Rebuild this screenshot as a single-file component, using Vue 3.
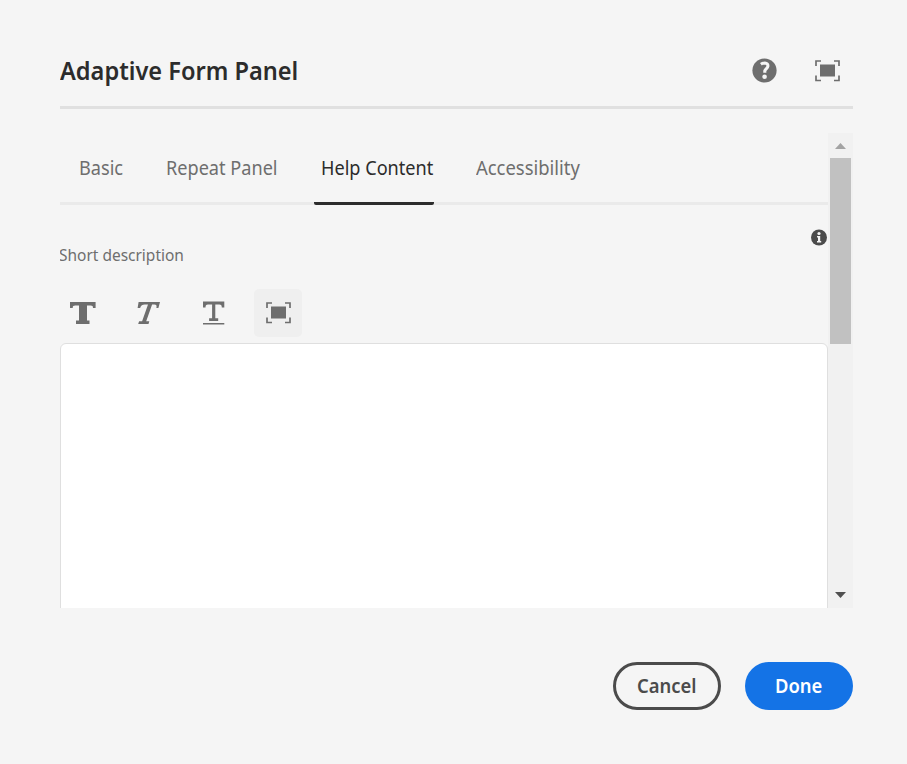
<script setup>
import { ref } from 'vue'

const tabs = [
  { id: 'basic', label: 'Basic' },
  { id: 'repeat', label: 'Repeat Panel' },
  { id: 'help', label: 'Help Content' },
  { id: 'access', label: 'Accessibility' }
]
const active = ref('help')
</script>

<template>
  <main class="dialog">
    <header class="head">
      <h1><span class="fit">Adaptive Form Panel</span></h1>
      <div class="head-actions">
        <button class="plain" aria-label="Help">
          <svg width="25" height="25" viewBox="0 0 25 25">
            <circle cx="12.5" cy="12.5" r="12.1" fill="#6e6e6e" />
            <path d="M8.9 6.2C10.3 5.2 11.7 5 12.9 5C15.2 5.1 16 6.6 15.9 8.1C15.8 10.3 13.2 11.1 12.8 12.8V14.8" fill="none" stroke="#f5f5f5" stroke-width="3.1" />
            <circle cx="12.6" cy="18.7" r="2.3" fill="#f5f5f5" />
          </svg>
        </button>
        <button class="plain" aria-label="Toggle fullscreen">
          <svg width="25" height="22" viewBox="0 0 25 22">
            <path d="M1 6V1H6M19 1H24V6M24 15.5V20.5H19M6 20.5H1V15.5" fill="none" stroke="#6e6e6e" stroke-width="1.7" />
            <rect x="5" y="4.5" width="15" height="12" fill="#6e6e6e" />
          </svg>
        </button>
      </div>
    </header>

    <section class="viewport">
      <div class="content">
        <nav class="tabs">
          <button
            v-for="tab in tabs"
            :key="tab.id"
            :class="['tab', tab.id, { active: active === tab.id }]"
            @click="active = tab.id"
          ><span class="fit">{{ tab.label }}</span></button>
        </nav>
        <div class="info-row">
          <svg width="16" height="17" viewBox="0 0 16 17">
            <circle cx="8" cy="8.5" r="8" fill="#4b4b4b" />
            <circle cx="8" cy="4.5" r="1.6" fill="#f5f5f5" />
            <path d="M6 7.1H9.2V12H10.2V13.5H6V12H7V8.5H6Z" fill="#f5f5f5" />
          </svg>
        </div>
        <div class="label"><span class="fit">Short description</span></div>
        <div class="toolbar">
          <button class="tool" aria-label="Bold">
            <svg width="26" height="22" viewBox="0 0 26 22">
              <path d="M0 0H25.6V6H23C23 4 22.4 3.4 20.6 3.4H17V18.6H19.5V22H6V18.6H9V3.4H5.2C3.4 3.4 2.7 4 2.7 6H0Z" />
            </svg>
          </button>
          <button class="tool" aria-label="Italic">
            <svg width="24" height="22" viewBox="0 0 24 22">
              <path transform="translate(.8 0)" d="M1.8 0H23.2L21.6 6H19.6C20.1 3.6 19.6 2.6 17.5 2.6H15.3L9.4 19.2H12.5L11.7 22H1.4L2.3 19.2H5.3L11.2 2.6H8C5.4 2.6 4.4 3.6 3.3 6H.8Z" />
            </svg>
          </button>
          <button class="tool" aria-label="Underline">
            <svg width="24" height="24" viewBox="0 0 24 24">
              <path transform="translate(2 0)" d="M0 .6H21.3V6.6H18.8C18.7 4 18.3 3.4 16.3 3.4H12.3V17.3H15.2V20H6.1V17.3H9.1V3.4H5C3 3.4 2.6 4 2.5 6.6H0ZM0 22H21.3V23.5H0Z" />
            </svg>
          </button>
          <button class="tool shaded" aria-label="Fullscreen editor">
            <svg width="25" height="22" viewBox="0 0 25 22">
              <path d="M1 6V1H6M19 1H24V6M24 15.5V20.5H19M6 20.5H1V15.5" fill="none" stroke="#6e6e6e" stroke-width="1.7" />
              <rect x="5" y="4.5" width="15" height="12" />
            </svg>
          </button>
        </div>
        <div class="editor" contenteditable="true"></div>
      </div>
      <div class="scrollbar">
        <svg class="arrow" width="11" height="6" viewBox="0 0 11 6"><path d="M0 6L5.5 0L11 6Z" fill="#a3a3a3" /></svg>
        <div class="thumb"></div>
        <svg class="arrow down" width="11" height="6" viewBox="0 0 11 6"><path d="M0 0H11L5.5 6Z" fill="#505050" /></svg>
      </div>
    </section>

    <footer class="foot">
      <button class="btn cancel"><span class="fit">Cancel</span></button>
      <button class="btn done"><span class="fit">Done</span></button>
    </footer>
  </main>
</template>

<style>
body { background: #f5f5f5; }
</style>

<style scoped>
* { box-sizing: border-box; }
button {
  font: inherit;
  border: 0;
  padding: 0;
  background: none;
  flex: none;
}
svg { display: block; flex: none; }
.fit {
  display: inline-block;
  transform-origin: left center;
  white-space: nowrap;
}
.dialog {
  width: 907px;
  height: 764px;
  padding: 36px 54px 54px 60px;
  display: flex;
  flex-direction: column;
  background: #f5f5f5;
  font-family: "Noto Sans", "Open Sans", sans-serif;
  color: #6e6e6e;
}
.head {
  height: 73px;
  flex: none;
  display: flex;
  justify-content: space-between;
  border-bottom: 3px solid #e0e0e0;
}
h1 {
  margin: 0;
  font-size: 25px;
  font-weight: 600;
  line-height: 69px;
  color: #2c2c2c;
}
h1 .fit { transform: scaleX(0.943); }
.head-actions {
  display: flex;
  align-items: center;
  gap: 38px;
  padding-right: 13px;
  height: 69px;
}
.viewport {
  margin-top: 24px;
  height: 475px;
  flex: none;
  display: flex;
  overflow: hidden;
}
.content {
  width: 768px;
  display: flex;
  flex-direction: column;
}
.tabs {
  display: flex;
  height: 72px;
  flex: none;
  border-bottom: 3px solid #eaeaea;
}
.tab {
  height: 72px;
  font-size: 19px;
  line-height: 70px;
  text-align: left;
  color: #6e6e6e;
  display: flex;
}
.tab .fit { transform: scaleX(0.954); }
.tab.access .fit { transform: scaleX(0.97); }
.basic { width: 87px; padding-left: 19px; }
.repeat { width: 167px; padding-left: 19px; }
.help { width: 120px; padding-left: 7px; }
.access { padding-left: 42px; }
.active {
  color: #2c2c2c;
  background: linear-gradient(#2c2c2c, #2c2c2c) bottom / 100% 3px no-repeat;
  border-radius: 2px;
}
.info-row {
  display: flex;
  justify-content: flex-end;
  height: 41px;
  flex: none;
  padding: 24px 1px 0 0;
}
.label {
  height: 43px;
  flex: none;
  margin-left: -1px;
  font-size: 17px;
  line-height: 18px;
}
.label .fit { transform: scaleX(0.91); }
.toolbar {
  display: flex;
  gap: 17px;
  height: 54px;
  flex: none;
  margin-left: -1px;
}
.tool {
  width: 48px;
  height: 48px;
  display: flex;
  align-items: center;
  justify-content: center;
  fill: #6e6e6e;
}
.tool.shaded { background: #efefef; border-radius: 5px; }
.editor {
  height: 300px;
  flex: none;
  background: #fff;
  border: 1px solid #dfdfdf;
  border-radius: 6px;
}
.scrollbar {
  width: 25px;
  background: #f1f1f1;
  display: flex;
  flex-direction: column;
  align-items: center;
  padding: 10px 0;
}
.thumb {
  width: 21px;
  height: 186px;
  margin-top: 9px;
  background: #c1c1c1;
}
.down { margin-top: auto; }
.foot {
  display: flex;
  justify-content: flex-end;
  gap: 24px;
  margin-top: 54px;
}
.btn {
  width: 108px;
  height: 48px;
  border-radius: 24px;
  font-size: 19px;
  font-weight: 600;
  display: flex;
  align-items: center;
}
.btn .fit { transform: scaleX(0.97); }
.cancel { border: 3px solid #4b4b4b; color: #4b4b4b; padding-left: 21px; }
.done { background: #1473e6; color: #fff; padding-left: 30px; }
</style>
